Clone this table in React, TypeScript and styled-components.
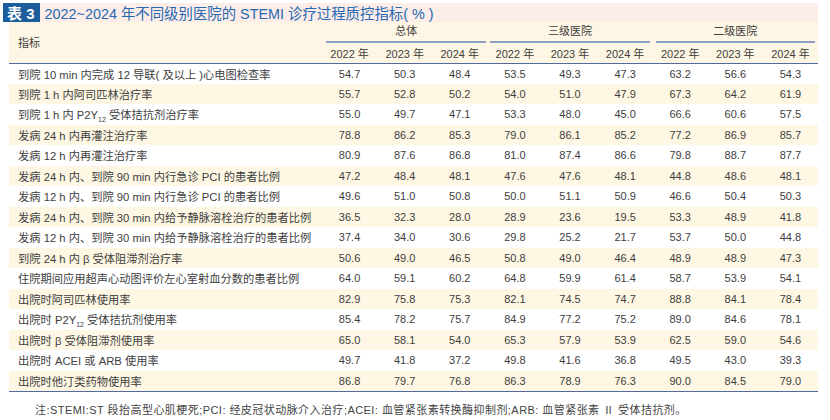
import React from "react";
import styled, { createGlobalStyle } from "styled-components";

const GlobalStyle = createGlobalStyle`
  html, body {
    margin: 0;
    padding: 0;
    background: #ffffff;
  }
  body {
    font-family: "Liberation Sans", "Noto Sans CJK SC", sans-serif;
    color: #3e3e3e;
  }
`;

const Page = styled.div`
  width: 830px;
  height: 420px;
  padding: 3px 12px 0 3px;
  box-sizing: border-box;
  display: flex;
  flex-direction: column;
`;

const TitleBar = styled.div`
  display: flex;
  align-items: center;
  height: 19px;
  background: #fcede9;
`;

const TitleBadge = styled.div`
  display: flex;
  align-items: center;
  height: 100%;
  padding: 0 5px 0 4px;
  background: #1b5c9c;
  color: #ffffff;
  font-size: 15px;
  font-weight: bold;
`;

const TitleText = styled.div`
  margin-left: 5px;
  color: #2769b0;
  font-size: 14.4px;
`;

const Table = styled.table`
  margin-left: 6px;
  width: 809px;
  border-collapse: collapse;
  table-layout: fixed;
  font-size: 11px;
  border-bottom: 1.5px solid #4f6c9c;
`;

const Head = styled.thead`
  background: #fdf6e4;
  border-bottom: 1.5px solid #4f6c9c;
`;

const HeadRow = styled.tr`
  height: 20px;
`;

const LabelHead = styled.th`
  text-align: left;
  font-weight: normal;
  padding-left: 9px;
  vertical-align: middle;
`;

const GroupHead = styled.th`
  font-weight: normal;
  padding: 0;
  vertical-align: bottom;
`;

const GroupLabel = styled.div<{ $first?: boolean }>`
  margin: 0 ${(p) => (p.$first ? "1px 0 4px" : "3px")};
  padding-bottom: 3px;
  border-bottom: 2px solid #8fa0c2;
  text-align: center;
`;

const YearHead = styled.th`
  font-weight: normal;
  padding: 0;
  text-align: center;
`;

const Row = styled.tr<{ $shaded: boolean }>`
  height: 20.5px;
  background: ${(p) => (p.$shaded ? "#fdf7e3" : "#ffffff")};
`;

const LabelCell = styled.td`
  padding: 0 0 0 9px;
  font-size: 11.25px;
  white-space: nowrap;
  overflow: hidden;
`;

const NumCell = styled.td`
  padding: 0;
  text-align: center;
`;

const Note = styled.div`
  margin-top: 9px;
  padding-left: 32px;
  font-size: 11px;
  letter-spacing: 0.45px;
  color: #444;
`;

const years = ["2022 年", "2023 年", "2024 年"];

const p2y = (prefix: string, suffix: string) => (
  <>
    {prefix}P2Y<sub style={{ fontSize: "7px" }}>12</sub>
    {suffix}
  </>
);

const rows: { label: React.ReactNode; values: string[] }[] = [
  { label: "到院 10 min 内完成 12 导联( 及以上 )心电图检查率", values: ["54.7", "50.3", "48.4", "53.5", "49.3", "47.3", "63.2", "56.6", "54.3"] },
  { label: "到院 1 h 内阿司匹林治疗率", values: ["55.7", "52.8", "50.2", "54.0", "51.0", "47.9", "67.3", "64.2", "61.9"] },
  { label: p2y("到院 1 h 内 ", " 受体拮抗剂治疗率"), values: ["55.0", "49.7", "47.1", "53.3", "48.0", "45.0", "66.6", "60.6", "57.5"] },
  { label: "发病 24 h 内再灌注治疗率", values: ["78.8", "86.2", "85.3", "79.0", "86.1", "85.2", "77.2", "86.9", "85.7"] },
  { label: "发病 12 h 内再灌注治疗率", values: ["80.9", "87.6", "86.8", "81.0", "87.4", "86.6", "79.8", "88.7", "87.7"] },
  { label: "发病 24 h 内、到院 90 min 内行急诊 PCI 的患者比例", values: ["47.2", "48.4", "48.1", "47.6", "47.6", "48.1", "44.8", "48.6", "48.1"] },
  { label: "发病 12 h 内、到院 90 min 内行急诊 PCI 的患者比例", values: ["49.6", "51.0", "50.8", "50.0", "51.1", "50.9", "46.6", "50.4", "50.3"] },
  { label: "发病 24 h 内、到院 30 min 内给予静脉溶栓治疗的患者比例", values: ["36.5", "32.3", "28.0", "28.9", "23.6", "19.5", "53.3", "48.9", "41.8"] },
  { label: "发病 12 h 内、到院 30 min 内给予静脉溶栓治疗的患者比例", values: ["37.4", "34.0", "30.6", "29.8", "25.2", "21.7", "53.7", "50.0", "44.8"] },
  { label: "到院 24 h 内 β 受体阻滞剂治疗率", values: ["50.6", "49.0", "46.5", "50.8", "49.0", "46.4", "48.9", "48.9", "47.3"] },
  { label: "住院期间应用超声心动图评价左心室射血分数的患者比例", values: ["64.0", "59.1", "60.2", "64.8", "59.9", "61.4", "58.7", "53.9", "54.1"] },
  { label: "出院时阿司匹林使用率", values: ["82.9", "75.8", "75.3", "82.1", "74.5", "74.7", "88.8", "84.1", "78.4"] },
  { label: p2y("出院时 ", " 受体拮抗剂使用率"), values: ["85.4", "78.2", "75.7", "84.9", "77.2", "75.2", "89.0", "84.6", "78.1"] },
  { label: "出院时 β 受体阻滞剂使用率", values: ["65.0", "58.1", "54.0", "65.3", "57.9", "53.9", "62.5", "59.0", "54.6"] },
  { label: "出院时 ACEI 或 ARB 使用率", values: ["49.7", "41.8", "37.2", "49.8", "41.6", "36.8", "49.5", "43.0", "39.3"] },
  { label: "出院时他汀类药物使用率", values: ["86.8", "79.7", "76.8", "86.3", "78.9", "76.3", "90.0", "84.5", "79.0"] },
];

export default function App() {
  return (
    <>
      <GlobalStyle />
      <Page>
        <TitleBar>
          <TitleBadge>表 3</TitleBadge>
          <TitleText>2022~2024 年不同级别医院的 STEMI 诊疗过程质控指标( % )</TitleText>
        </TitleBar>
        <Table>
          <colgroup>
            <col style={{ width: "313px" }} />
            {Array.from({ length: 9 }).map((_, i) => (
              <col key={i} />
            ))}
          </colgroup>
          <Head>
            <HeadRow>
              <LabelHead rowSpan={2}>指标</LabelHead>
              <GroupHead colSpan={3}>
                <GroupLabel $first>总体</GroupLabel>
              </GroupHead>
              <GroupHead colSpan={3}>
                <GroupLabel>三级医院</GroupLabel>
              </GroupHead>
              <GroupHead colSpan={3}>
                <GroupLabel>二级医院</GroupLabel>
              </GroupHead>
            </HeadRow>
            <HeadRow>
              {[0, 1, 2].flatMap((g) =>
                years.map((y) => <YearHead key={`${g}-${y}`}>{y}</YearHead>)
              )}
            </HeadRow>
          </Head>
          <tbody>
            {rows.map((r, i) => (
              <Row key={i} $shaded={i % 2 === 1}>
                <LabelCell>{r.label}</LabelCell>
                {r.values.map((v, j) => (
                  <NumCell key={j}>{v}</NumCell>
                ))}
              </Row>
            ))}
          </tbody>
        </Table>
        <Note>
          注:STEMI:ST 段抬高型心肌梗死;PCI: 经皮冠状动脉介入治疗;ACEI: 血管紧张素转换酶抑制剂;ARB: 血管紧张素 Ⅱ 受体拮抗剂。
        </Note>
      </Page>
    </>
  );
}
